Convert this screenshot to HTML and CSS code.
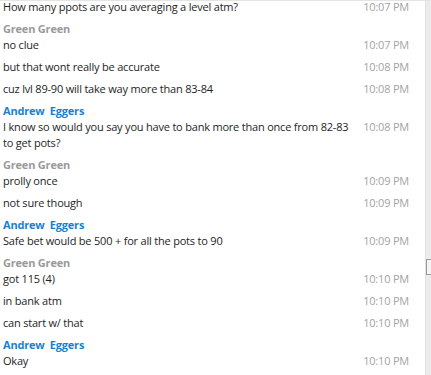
FILE: index.html
```html
<!DOCTYPE html>
<html lang="en">
<head>
  <meta charset="UTF-8" />
  <title>Conversation</title>
  <link rel="stylesheet" href="styles.css">
</head>
<body>
  <div id="window">
    <div id="log">
      <div class="msg"><span class="text">How many ppots are you averaging a level atm?</span><span class="time">10:07 PM</span></div>

      <div class="name green">Green Green</div>
      <div class="msg first"><span class="text">no clue</span><span class="time">10:07 PM</span></div>
      <div class="msg"><span class="text">but that wont really be accurate</span><span class="time">10:08 PM</span></div>
      <div class="msg"><span class="text">cuz lvl 89-90 will take way more than 83-84</span><span class="time">10:08 PM</span></div>

      <div class="name blue">Andrew &nbsp;Eggers</div>
      <div class="msg first"><span class="text">I know so would you say you have to bank more than once from 82-83 to get pots?</span><span class="time">10:08 PM</span></div>

      <div class="name green">Green Green</div>
      <div class="msg first"><span class="text">prolly once</span><span class="time">10:09 PM</span></div>
      <div class="msg"><span class="text">not sure though</span><span class="time">10:09 PM</span></div>

      <div class="name blue">Andrew &nbsp;Eggers</div>
      <div class="msg first"><span class="text">Safe bet would be 500 + for all the pots to 90</span><span class="time">10:09 PM</span></div>

      <div class="name green">Green Green</div>
      <div class="msg first"><span class="text">got 115 (4)</span><span class="time">10:10 PM</span></div>
      <div class="msg"><span class="text">in bank atm</span><span class="time">10:10 PM</span></div>
      <div class="msg"><span class="text">can start w/ that</span><span class="time">10:10 PM</span></div>

      <div class="name blue">Andrew &nbsp;Eggers</div>
      <div class="msg first"><span class="text">Okay</span><span class="time">10:10 PM</span></div>
    </div>
    <div id="scrollbar">
      <div class="thumb"></div>
    </div>
  </div>
</body>
</html>
```

FILE: styles.css
```css
body {
  margin: 0;
  background: #fff;
  font-family: "Open Sans", "Noto Sans", sans-serif;
  font-size: 11px;
  letter-spacing: -0.2px;
  color: #1e1e1e;
  overflow: hidden;
}

#window {
  display: flex;
  width: 431px;
  height: 375px;
  border-top: 1px solid #e4e4e4;
  box-sizing: border-box;
  overflow: hidden;
}

#log {
  flex: 1;
  padding: 0 16px 0 3px;
  margin-top: -2px;
}

.msg {
  display: grid;
  grid-template-columns: 1fr 46px;
  column-gap: 11px;
  line-height: 16px;
  margin-top: 6px;
}

.msg:first-child,
.msg.first {
  margin-top: 0;
}

.time {
  color: #a3a3a3;
  text-align: right;
  white-space: nowrap;
}

.name {
  font-weight: bold;
  line-height: 16px;
  margin-top: 6px;
}

.green {
  color: #9a9a9a;
}

.blue {
  color: #1a7fd1;
}

#scrollbar {
  width: 5px;
  background: #ececec;
  border-left: 1px solid #e2e2e2;
  padding-top: 258px;
}

.thumb {
  height: 14px;
  border: 1px solid #9a9a9a;
  border-right: none;
  background: #f4f4f4;
}
```
